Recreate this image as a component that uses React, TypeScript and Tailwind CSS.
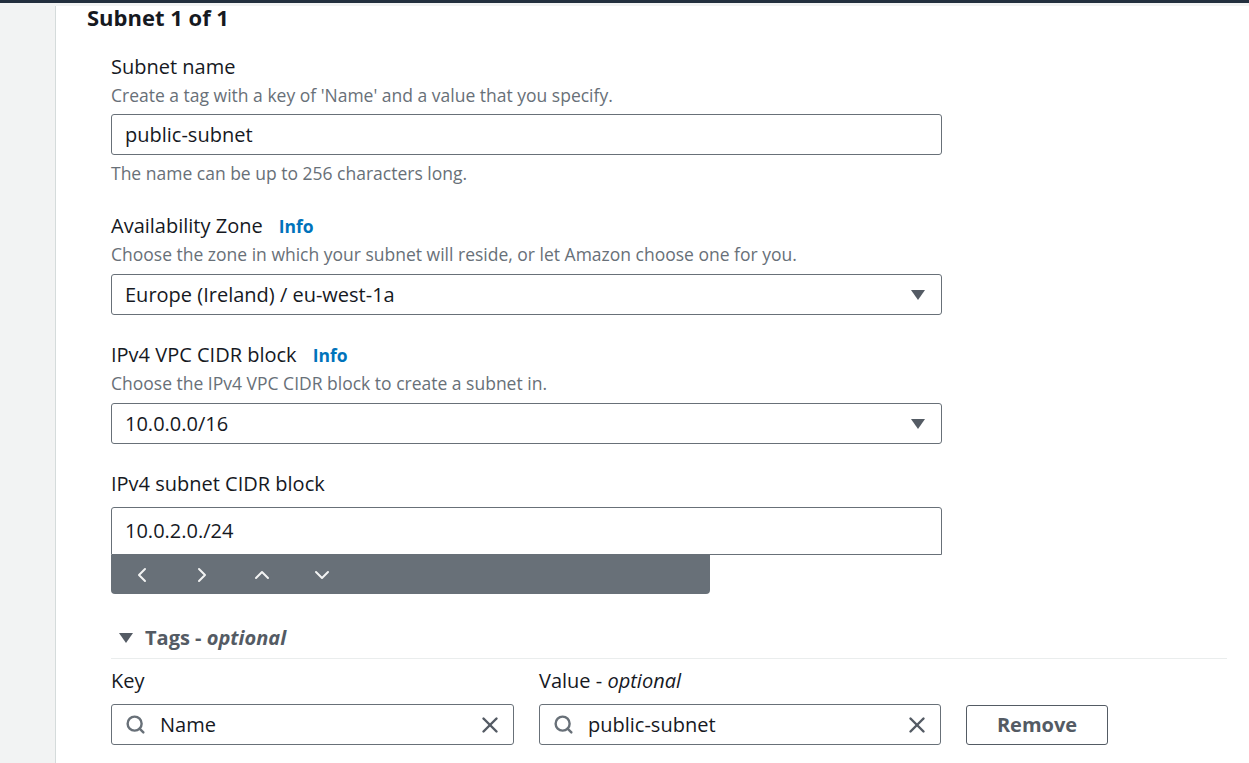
import React from "react";
import { ChevronLeft, ChevronRight, ChevronUp, ChevronDown, Search, X } from "lucide-react";

const font = { fontFamily: '"Open Sans", "Noto Sans", sans-serif' };

const Caret = ({ className = "" }: { className?: string }) => (
  <svg width="14" height="10" viewBox="0 0 14 10" className={className}>
    <polygon points="0,0 14,0 7,10" fill="#545b64" />
  </svg>
);

const Info = () => (
  <span className="ml-4 text-[17.5px] font-bold text-[#0073bb]">Info</span>
);

const Select = ({ value }: { value: string }) => (
  <div className="mt-[9px] flex h-[41px] w-[831px] items-center justify-between rounded-[3px] border border-[#687078] pl-[13px] pr-[16px] text-[20px] text-[#16191f]">
    <span>{value}</span>
    <Caret />
  </div>
);

const SearchInput = ({ value }: { value: string }) => (
  <div className="mt-[11px] flex h-[41px] items-center rounded-[3px] border border-[#687078] pl-[13px] pr-[10px] text-[20px] text-[#16191f]">
    <Search size={21} strokeWidth={2.75} className="text-[#687078]" />
    <span className="ml-[14px] flex-1">{value}</span>
    <X size={26} strokeWidth={2.25} className="text-[#545b64]" />
  </div>
);

export default function App() {
  return (
    <div className="min-h-[763px] w-full bg-white" style={font}>
      <div className="h-[3px] bg-[#232f3e]" />
      <div className="h-[3px] bg-[#f2f3f3]" />
      <div className="flex">
        <div className="w-[56px] shrink-0 border-r border-[#d5dbdb] bg-[#f2f3f3]" />
        <div className="flex-1 pb-6 pl-[31px]">
          <h2 className="text-[22px] font-bold leading-[22px] text-[#16191f]">Subnet 1 of 1</h2>

          <div className="pl-[24px]">
            {/* Subnet name */}
            <div className="mt-[27px] text-[20px] leading-6 text-[#16191f]">Subnet name</div>
            <div className="mt-[5px] text-[17.5px] leading-[22px] text-[#687078]">
              Create a tag with a key of 'Name' and a value that you specify.
            </div>
            <div className="mt-2 flex h-[41px] w-[831px] items-center rounded-[3px] border border-[#687078] pl-[13px] text-[20px] text-[#16191f]">
              public-subnet
            </div>
            <div className="mt-[7px] text-[17.5px] leading-[22px] text-[#687078]">
              The name can be up to 256 characters long.
            </div>

            {/* Availability zone */}
            <div className="mt-[30px] flex items-baseline text-[20px] leading-6 text-[#16191f]">
              Availability Zone <Info />
            </div>
            <div className="mt-[5px] text-[17.5px] leading-[22px] text-[#687078]">
              Choose the zone in which your subnet will reside, or let Amazon choose one for you.
            </div>
            <Select value="Europe (Ireland) / eu-west-1a" />

            {/* VPC CIDR */}
            <div className="mt-[28px] flex items-baseline text-[20px] leading-6 text-[#16191f]">
              IPv4 VPC CIDR block <Info />
            </div>
            <div className="mt-[5px] text-[17.5px] leading-[22px] text-[#687078]">
              Choose the IPv4 VPC CIDR block to create a subnet in.
            </div>
            <Select value="10.0.0.0/16" />

            {/* Subnet CIDR */}
            <div className="mt-[28px] text-[20px] leading-6 text-[#16191f]">IPv4 subnet CIDR block</div>
            <div className="mt-[11px] flex h-[48px] w-[831px] items-center rounded-t-[3px] border border-[#687078] pl-[13px] text-[20px] text-[#16191f]">
              10.0.2.0./24
            </div>
            <div className="flex h-[39px] w-[599px] items-center gap-[36px] rounded-b-[4px] bg-[#687078] pl-[19px] text-[#f2f3f3]">
              <ChevronLeft size={24} strokeWidth={2} />
              <ChevronRight size={24} strokeWidth={2} />
              <ChevronUp size={24} strokeWidth={2} />
              <ChevronDown size={24} strokeWidth={2} />
            </div>

            {/* Tags */}
            <div className="mt-[32px] flex items-center text-[20px] font-bold leading-6 text-[#545b64]">
              <Caret className="ml-2 mr-3" />
              <span>
                Tags - <i>optional</i>
              </span>
            </div>
            <div className="mt-2 mr-[22px] border-t border-[#eaeded]" />

            <div className="mt-[10px] flex items-end gap-[25px]">
              <div className="w-[403px]">
                <div className="text-[20px] leading-6 text-[#16191f]">Key</div>
                <SearchInput value="Name" />
              </div>
              <div className="w-[402px]">
                <div className="text-[20px] leading-6 text-[#16191f]">
                  Value - <i>optional</i>
                </div>
                <SearchInput value="public-subnet" />
              </div>
              <button className="flex h-[40px] w-[142px] items-center justify-center rounded-[3px] border border-[#545b64] text-[20px] font-bold text-[#545b64]">
                Remove
              </button>
            </div>
          </div>
        </div>
      </div>
    </div>
  );
}
